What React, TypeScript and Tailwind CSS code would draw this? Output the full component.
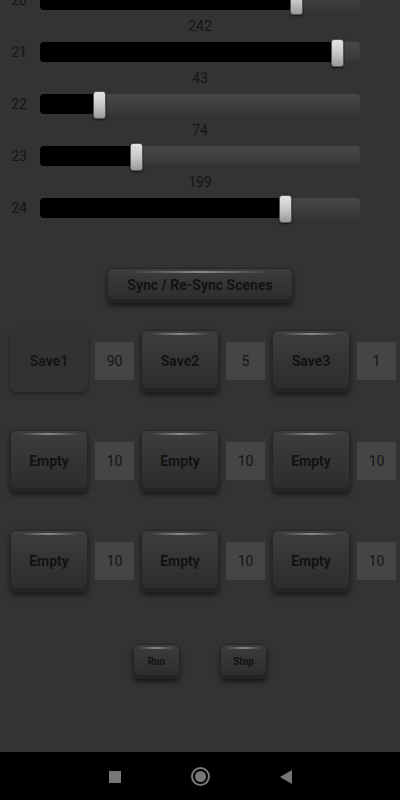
import React from 'react';

type Slider = { ch: number; value: number };

const sliders: Slider[] = [
  { ch: 20, value: 208 },
  { ch: 21, value: 242 },
  { ch: 22, value: 43 },
  { ch: 23, value: 74 },
  { ch: 24, value: 199 },
];

const sceneRows = [
  [
    { label: 'Save1', n: 90, flat: true },
    { label: 'Save2', n: 5 },
    { label: 'Save3', n: 1 },
  ],
  [
    { label: 'Empty', n: 10 },
    { label: 'Empty', n: 10 },
    { label: 'Empty', n: 10 },
  ],
  [
    { label: 'Empty', n: 10 },
    { label: 'Empty', n: 10 },
    { label: 'Empty', n: 10 },
  ],
];

// thumb centre inside the 320px track (0..255 maps to ~9..313)
function thumbX(v: number) {
  return 8.7 + (v / 255) * 304;
}

function SliderRow({ s }: { s: Slider }) {
  const x = thumbX(s.value);
  return (
    <div>
      <div className="h-[20px] text-center text-[14px] leading-[20px] text-[#151515]">{s.value}</div>
      <div className="flex h-[32px] items-center">
        <div className="w-[40px] pr-[2px] text-center text-[14px] text-[#151515]">{s.ch}</div>
        <div className="relative h-[20px] w-[320px] rounded-[4px] bg-gradient-to-b from-[#474747] via-[#404040] to-[#363636]">
          <div className="absolute left-0 top-0 h-full rounded-l-[4px] bg-black" style={{ width: x }} />
          <div
            className="absolute top-[-3px] h-[28px] w-[13px] rounded-[3px] border border-[#555] bg-gradient-to-b from-[#e4e4e4] via-[#c8c8c8] to-[#9a9a9a] shadow-[0_1px_2px_rgba(0,0,0,0.6)]"
            style={{ left: x - 6.5 }}
          />
        </div>
      </div>
    </div>
  );
}

function RaisedButton({ label, className, flat }: { label: string; className: string; flat?: boolean }) {
  if (flat) {
    return (
      <div
        className={`flex items-center justify-center rounded-[6px] border border-[#2e2e2e] bg-[#323232] font-bold text-[#151515] shadow-[0_2px_4px_rgba(0,0,0,0.35)] ${className}`}
      >
        {label}
      </div>
    );
  }
  return (
    <div
      className={`relative flex items-center justify-center rounded-[6px] border border-[#262626] bg-gradient-to-b from-[#3d3d3d] via-[#343434] to-[#2c2c2c] font-bold text-[#121212] shadow-[0_3px_5px_rgba(0,0,0,0.55),inset_0_-3px_0_#242424] ${className}`}
    >
      <span className="absolute left-[12%] right-[12%] top-[2px] h-[2px] rounded-full bg-gradient-to-r from-transparent via-[#8a8a8a] to-transparent" />
      {label}
    </div>
  );
}

export default function App() {
  return (
    <div className="flex h-[800px] w-[400px] flex-col overflow-hidden bg-[#333333] font-['Roboto','Liberation_Sans',sans-serif]">
      <div className="flex-1">
        {/* sliders (list is scrolled, first row cut off) */}
        <div className="mt-[-36px]">
          {sliders.map((s) => (
            <SliderRow key={s.ch} s={s} />
          ))}
        </div>

        <div className="mt-[44px] flex justify-center">
          <RaisedButton label="Sync / Re-Sync Scenes" className="h-[35px] w-[186px] text-[14px]" />
        </div>

        {/* scene slots */}
        <div className="mt-[27px] flex flex-col gap-[38px] px-[10px]">
          {sceneRows.map((row, i) => (
            <div key={i} className="flex gap-[7px]">
              {row.map((c, j) => (
                <div key={j} className="flex items-center gap-[7px]">
                  <RaisedButton label={c.label} flat={c.flat} className="h-[62px] w-[78px] text-[14px]" />
                  <div className="flex h-[38px] w-[39px] items-center justify-center bg-[#454545] text-[14px] text-[#151515]">
                    {c.n}
                  </div>
                </div>
              ))}
            </div>
          ))}
        </div>

        <div className="mt-[52px] flex justify-center gap-[40px]">
          <RaisedButton label="Run" className="h-[35px] w-[47px] text-[10px]" />
          <RaisedButton label="Stop" className="h-[35px] w-[47px] text-[10px]" />
        </div>
      </div>

      {/* android nav bar */}
      <div className="flex h-[48px] items-center justify-center gap-[70px] bg-black pt-[1px]">
        <div className="h-[12px] w-[12px] bg-[#777]" />
        <div className="flex h-[19px] w-[19px] items-center justify-center rounded-full border-2 border-[#777]">
          <div className="h-[11px] w-[11px] rounded-full bg-[#777]" />
        </div>
        <svg width="12" height="14" viewBox="0 0 12 14">
          <path d="M12 0 L0 7 L12 14 Z" fill="#777" />
        </svg>
      </div>
    </div>
  );
}
